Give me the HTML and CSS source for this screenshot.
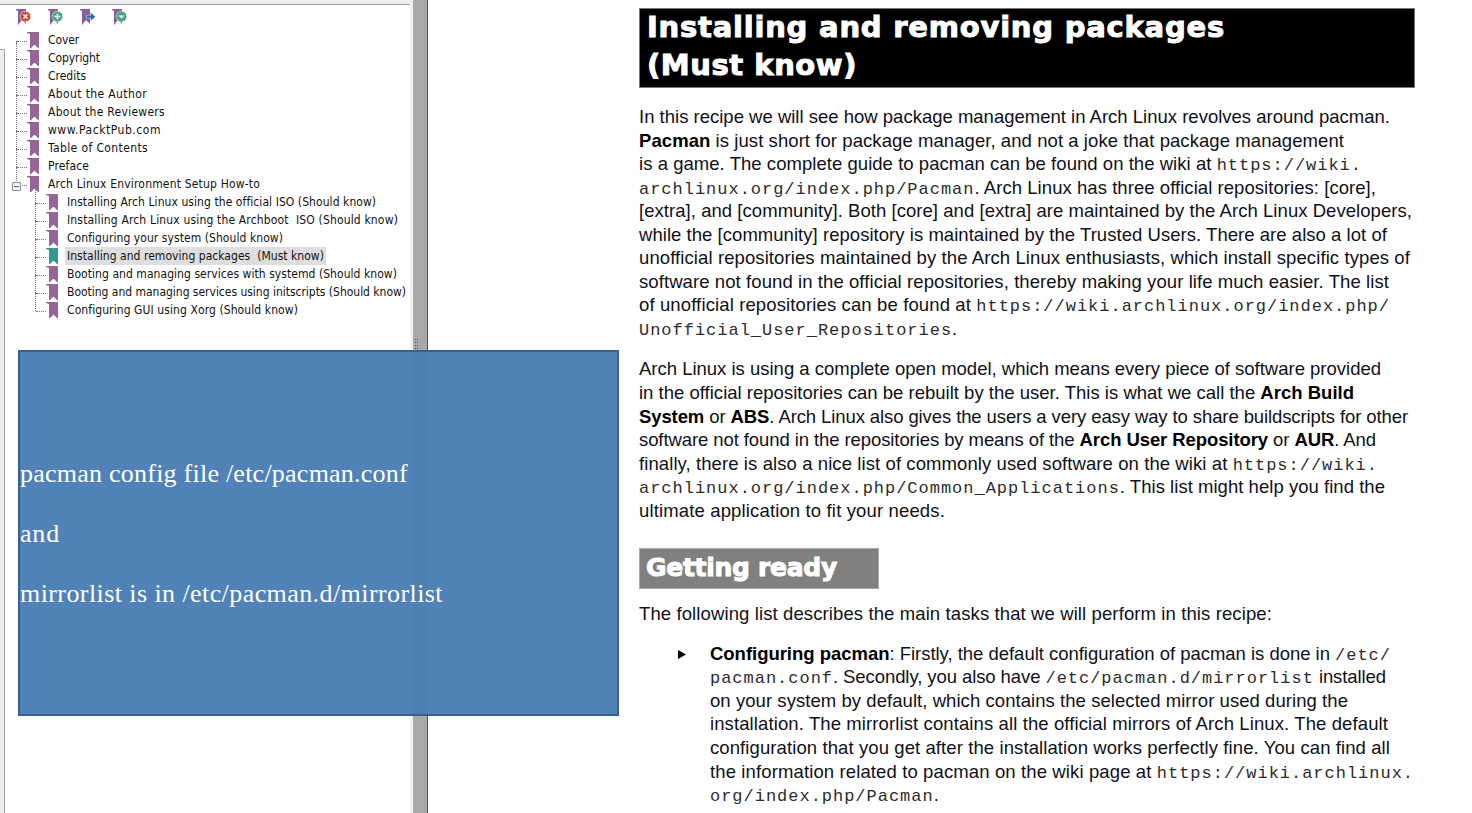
FILE: index.html
```
<!DOCTYPE html>
<html lang="en">
<head>
<meta charset="utf-8">
<title>Arch Linux Environment Setup How-to</title>
<link rel="stylesheet" href="styles.css">
</head>
<body>
<svg class="defs" width="0" height="0">
  <symbol id="mark" viewBox="0 0 12 16"><path d="M0 0h12v16h-1l-2-2-1-1h-1l-1 1-2 2H3V2L0 1z" fill="currentColor"/></symbol>
  <symbol id="tool" viewBox="0 0 10 16"><path d="M0 0h10v15L6 11 2 16V2L0 1z" fill="#875fa0"/></symbol>
</svg>
<div class="app">
  <aside class="side">
    <div class="rail"></div>
    <div class="panel">
      <div class="tools">
        <svg width="16" height="17"><use href="#tool" width="10" height="16"/><circle cx="9.5" cy="7.5" r="5.300" fill="#c8503c" stroke="#fff" stroke-width=".5"/><path d="M7.500 5.500l4 4m0-4l-4 4" stroke="#fff" stroke-width="1.300"/></svg>
        <svg width="16" height="17"><use href="#tool" width="10" height="16"/><circle cx="9.5" cy="7.5" r="5.300" fill="#4ba57d" stroke="#fff" stroke-width=".5"/><path d="M6.500 7.500h6m-3-3v6" stroke="#fff" stroke-width="1.400"/></svg>
        <svg width="16" height="17"><use href="#tool" width="10" height="16"/><path d="M6.500 6.300h4v-3l5 4.400-5 4.400v-3h-4z" fill="#2d6cac" stroke="#fff" stroke-width=".4"/></svg>
        <svg width="16" height="17"><use href="#tool" width="10" height="16"/><circle cx="9.5" cy="7.5" r="5.300" fill="#4ba57d" stroke="#fff" stroke-width=".5"/><path d="M6.500 6.500h6l-3 3z" fill="#fff"/></svg>
      </div>
      <ul class="tree">
        <li><svg class="mark"><use href="#mark"/></svg><span class="fit" data-w="31">Cover</span></li>
        <li><svg class="mark"><use href="#mark"/></svg><span class="fit" data-w="52">Copyright</span></li>
        <li><svg class="mark"><use href="#mark"/></svg><span class="fit" data-w="38">Credits</span></li>
        <li><svg class="mark"><use href="#mark"/></svg><span class="fit" data-w="99">About the Author</span></li>
        <li><svg class="mark"><use href="#mark"/></svg><span class="fit" data-w="117">About the Reviewers</span></li>
        <li><svg class="mark"><use href="#mark"/></svg><span class="fit" data-w="113">www.PacktPub.com</span></li>
        <li><svg class="mark"><use href="#mark"/></svg><span class="fit" data-w="100">Table of Contents</span></li>
        <li><svg class="mark"><use href="#mark"/></svg><span class="fit" data-w="41">Preface</span></li>
        <li class="open"><svg class="mark"><use href="#mark"/></svg><span class="fit" data-w="212">Arch Linux Environment Setup How-to</span><i class="toggle"></i></li>
      </ul>
      <ul class="tree sub">
        <li><svg class="mark"><use href="#mark"/></svg><span class="fit" data-w="309">Installing Arch Linux using the official ISO (Should know)</span></li>
        <li><svg class="mark"><use href="#mark"/></svg><span class="fit" data-w="331">Installing Arch Linux using the Archboot  ISO (Should know)</span></li>
        <li><svg class="mark"><use href="#mark"/></svg><span class="fit" data-w="216">Configuring your system (Should know)</span></li>
        <li class="current"><svg class="mark"><use href="#mark"/></svg><b><span class="fit" data-w="257">Installing and removing packages  (Must know)</span></b></li>
        <li><svg class="mark"><use href="#mark"/></svg><span class="fit" data-w="330">Booting and managing services with systemd (Should know)</span></li>
        <li><svg class="mark"><use href="#mark"/></svg><span class="fit" data-w="339">Booting and managing services using initscripts (Should know)</span></li>
        <li><svg class="mark"><use href="#mark"/></svg><span class="fit" data-w="231">Configuring GUI using Xorg (Should know)</span></li>
      </ul>
    </div>
    <div class="gutter"></div>
    <div class="splitter"><i class="grip"></i></div>
  </aside>
  <main class="page">
    <h1><span class="fit" data-w="578">Installing and removing packages</span><br><span class="fit" data-w="210">(Must know)</span></h1>
    <p class="first">
      <span class="line"><span class="fit" data-w="751">In this recipe we will see how package management in Arch Linux revolves around pacman.</span></span>
      <span class="line"><span class="fit" data-w="705"><strong>Pacman</strong> is just short for package manager, and not a joke that package management</span></span>
      <span class="line"><span class="fit" data-w="723">is a game. The complete guide to pacman can be found on the wiki at <code>https://wiki.</code></span></span>
      <span class="line"><span class="fit" data-w="737"><code>archlinux.org/index.php/Pacman</code>. Arch Linux has three official repositories: [core],</span></span>
      <span class="line"><span class="fit" data-w="773">[extra], and [community]. Both [core] and [extra] are maintained by the Arch Linux Developers,</span></span>
      <span class="line"><span class="fit" data-w="748">while the [community] repository is maintained by the Trusted Users. There are also a lot of</span></span>
      <span class="line"><span class="fit" data-w="771">unofficial repositories maintained by the Arch Linux enthusiasts, which install specific types of</span></span>
      <span class="line"><span class="fit" data-w="750">software not found in the official repositories, thereby making your life much easier. The list</span></span>
      <span class="line"><span class="fit" data-w="751">of unofficial repositories can be found at <code>https://wiki.archlinux.org/index.php/</code></span></span>
      <span class="line"><span class="fit" data-w="318"><code>Unofficial_User_Repositories</code>.</span></span>
    </p>
    <p class="second">
      <span class="line"><span class="fit" data-w="742">Arch Linux is using a complete open model, which means every piece of software provided</span></span>
      <span class="line"><span class="fit" data-w="715">in the official repositories can be rebuilt by the user. This is what we call the <strong>Arch Build</strong></span></span>
      <span class="line"><span class="fit" data-w="769"><strong>System</strong> or <strong>ABS</strong>. Arch Linux also gives the users a very easy way to share buildscripts for other</span></span>
      <span class="line"><span class="fit" data-w="737">software not found in the repositories by means of the <strong>Arch User Repository</strong> or <strong>AUR</strong>. And</span></span>
      <span class="line"><span class="fit" data-w="739">finally, there is also a nice list of commonly used software on the wiki at <code>https://wiki.</code></span></span>
      <span class="line"><span class="fit" data-w="746"><code>archlinux.org/index.php/Common_Applications</code>. This list might help you find the</span></span>
      <span class="line"><span class="fit" data-w="306">ultimate application to fit your needs.</span></span>
    </p>
    <h2><span class="fit" data-w="191">Getting ready</span></h2>
    <p class="intro"><span class="line"><span class="fit" data-w="633">The following list describes the main tasks that we will perform in this recipe:</span></span></p>
    <div class="item">
      <svg class="arrow" width="8" height="9"><path d="M0 0l8 4.500-8 4.500z"/></svg>
      <p>
        <span class="line"><span class="fit" data-w="681"><strong>Configuring pacman</strong>: Firstly, the default configuration of pacman is done in <code>/etc/</code></span></span>
        <span class="line"><span class="fit" data-w="676"><code>pacman.conf</code>. Secondly, you also have <code>/etc/pacman.d/mirrorlist</code> installed</span></span>
        <span class="line"><span class="fit" data-w="638">on your system by default, which contains the selected mirror used during the</span></span>
        <span class="line"><span class="fit" data-w="678">installation. The mirrorlist contains all the official mirrors of Arch Linux. The default</span></span>
        <span class="line"><span class="fit" data-w="680">configuration that you get after the installation works perfectly fine. You can find all</span></span>
        <span class="line"><span class="fit" data-w="704">the information related to pacman on the wiki page at <code>https://wiki.archlinux.</code></span></span>
        <span class="line"><span class="fit" data-w="229"><code>org/index.php/Pacman</code>.</span></span>
      </p>
    </div>
  </main>
</div>
<div class="note">
  <p><span class="fit" data-w="388">pacman config file /etc/pacman.conf</span></p>
  <p><span class="fit" data-w="40">and</span></p>
  <p><span class="fit" data-w="423">mirrorlist is in /etc/pacman.d/mirrorlist</span></p>
</div>
<script src="fit.js"></script>
</body>
</html>
```
FILE: styles.css
```
* { box-sizing: border-box; }
body { margin: 0; height: 813px; overflow: hidden; background: #fff; color: #101018; position: relative; }
p, h1, h2, ul { margin: 0; padding: 0; }
.defs { position: absolute; }
.fit { display: inline-block; white-space: pre; }
.app { display: flex; height: 813px; }

.side { width: 428px; flex: none; display: flex; }
.rail { width: 5px; margin-top: 49px; background: #eee; border-top: 1px solid #a0a0a0; border-right: 1px solid #a0a0a0; }
.panel { width: 405px; padding-top: 9px; }
.side::before { content: ""; position: absolute; left: 0; top: 0; width: 410px; height: 4px; background: #eee; border-bottom: 1px solid #a0a0a0; }
.gutter { width: 3px; background: #f0f0f0; }
.splitter { width: 15px; background: #a9a9a9; border-right: 1px solid #505050; padding: 339px 0 0 2px; }
.grip { display: block; width: 4px; height: 11px; background: linear-gradient(#a9a9a9 0 0) 1px 0 / 1px 100% no-repeat, repeating-linear-gradient(#555 0 1px, transparent 1px 3px) 0 0 / 3px 100% no-repeat; }

.tools { display: flex; gap: 16px; padding-left: 11px; height: 22px; }
.tree { list-style: none; font: 12px/18px "DejaVu Sans Condensed", "DejaVu Sans", sans-serif; font-stretch: condensed; color: #111; }
.tree li { height: 18px; padding-left: 22px; display: flex; position: relative; }
.tree li::before { content: ""; position: absolute; left: 12px; top: 10px; width: 10px; border-top: 1px dotted #777; }
.tree li::after { content: ""; position: absolute; left: 11px; top: -8px; height: 18px; border-left: 1px dotted #777; }
.tree:not(.sub) li:first-child::after { top: 10px; height: 2px; }
.mark { width: 12px; height: 16px; margin: 1px 9px 0 0; color: #966496; flex: none; }
.toggle { position: absolute; z-index: 1; left: 7px; top: 7px; width: 9px; height: 9px; border: 1px solid #919191; border-radius: 1px; background: linear-gradient(#4b63a7, #4b63a7) center / 5px 1px no-repeat #f2f2f2; }
.sub { padding-left: 19px; }
.current .mark { color: #329696; }
.current b { font-weight: normal; background: #dedede; margin-left: -2px; padding: 0 2px; }

.page { margin-left: 211px; width: 777px; padding-top: 8px; font: 18.5px/23.55px "Liberation Sans", Arial, sans-serif; }
h1, h2 { color: #fff; font-family: "DejaVu Sans", sans-serif; font-weight: bold; -webkit-text-stroke: 1px #fff; }
h1 { width: 776px; height: 80px; background: #000; border: 1px solid #777; font-size: 29px; line-height: 38px; padding: 0 0 0 7px; }
h1 .fit { margin-top: -1px; height: 39px; vertical-align: top; }
h2 { width: 240px; height: 41px; background: #808080; border: 1px solid #aaa; font-size: 25px; line-height: 38px; padding-left: 6px; margin-top: 26px; }
h2 .fit { vertical-align: top; }
.line { display: block; height: 23.55px; white-space: nowrap; }
.line .fit { line-height: 23.55px; vertical-align: top; }
code { font: 17px/20px "Liberation Mono", "Courier New", monospace; letter-spacing: .98px; color: #2c2c2c; }
strong { color: #000; }
.first { padding-top: 17px; }
.second { padding-top: 17px; }
.intro { padding-top: 13px; }
.item { display: flex; padding: 16px 0 0 39px; }
.arrow { margin: 8px 24px 0 0; flex: none; }

.note { position: absolute; left: 18px; top: 350px; width: 601px; height: 366px; border: 2px solid #3a6090; background: rgba(77, 128, 183, .98); color: #fff; font: 26px/60px "Liberation Serif", serif; padding-top: 92px; }
.note p { height: 60px; }
```
FILE: fit.js
```
document.querySelectorAll('.fit').forEach(function (el) {
  var chars = el.textContent.length;
  el.querySelectorAll('code').forEach(function (c) { chars -= c.textContent.length; });
  var gap = Number(el.dataset.w) - el.getBoundingClientRect().width;
  if (chars > 2) el.style.letterSpacing = (gap / chars) + 'px';
});
```
